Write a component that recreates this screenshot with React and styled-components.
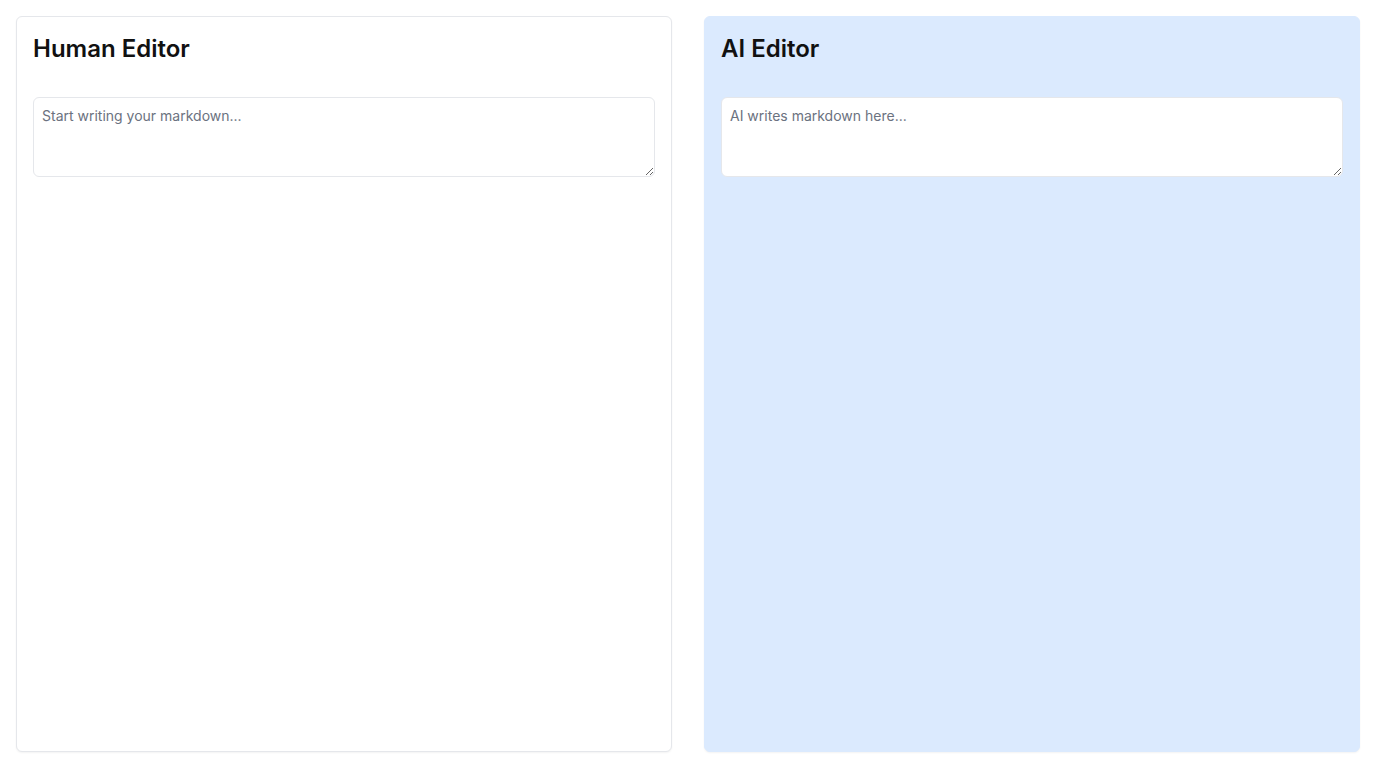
import React from "react";
import styled, { createGlobalStyle } from "styled-components";

const GlobalStyle = createGlobalStyle`
  * { box-sizing: border-box; }
  html, body { margin: 0; padding: 0; background: #ffffff; }
  body { font-family: Inter, "Noto Sans", sans-serif; color: #111827; }
`;

const Layout = styled("div")`
  display: grid;
  grid-template-columns: 1fr 1fr;
  gap: 32px;
  padding: 16px;
  height: 768px;
`;

const Panel = styled("section")`
  display: flex;
  flex-direction: column;
  padding: 16px;
  border-radius: 6px;
  border: 1px solid ${p => (p.$ai ? "#dbeafe" : "#e5e7eb")};
  background: ${p => (p.$ai ? "#dbeafe" : "#ffffff")};
  box-shadow: 0 1px 2px rgba(0, 0, 0, 0.05);
`;

const Title = styled("h2")`
  margin: 0 0 32px;
  font-size: 24px;
  line-height: 32px;
  font-weight: 600;
  color: #111111;
`;

const Editor = styled("textarea")`
  display: block;
  width: 100%;
  height: 80px;
  padding: 8px;
  border: 1px solid #e5e7eb;
  border-radius: 6px;
  background: #ffffff;
  font-family: Inter, "Noto Sans", sans-serif;
  font-size: 14px;
  line-height: 20px;
  color: #111827;
  resize: vertical;
  outline: none;

  &::placeholder {
    color: #6b7280;
  }
`;

const App = () => (
  <>
    <GlobalStyle />
    <Layout>
      <Panel>
        <Title>Human Editor</Title>
        <Editor placeholder="Start writing your markdown..." />
      </Panel>
      <Panel $ai>
        <Title>AI Editor</Title>
        <Editor placeholder="AI writes markdown here..." />
      </Panel>
    </Layout>
  </>
);

export default App;
